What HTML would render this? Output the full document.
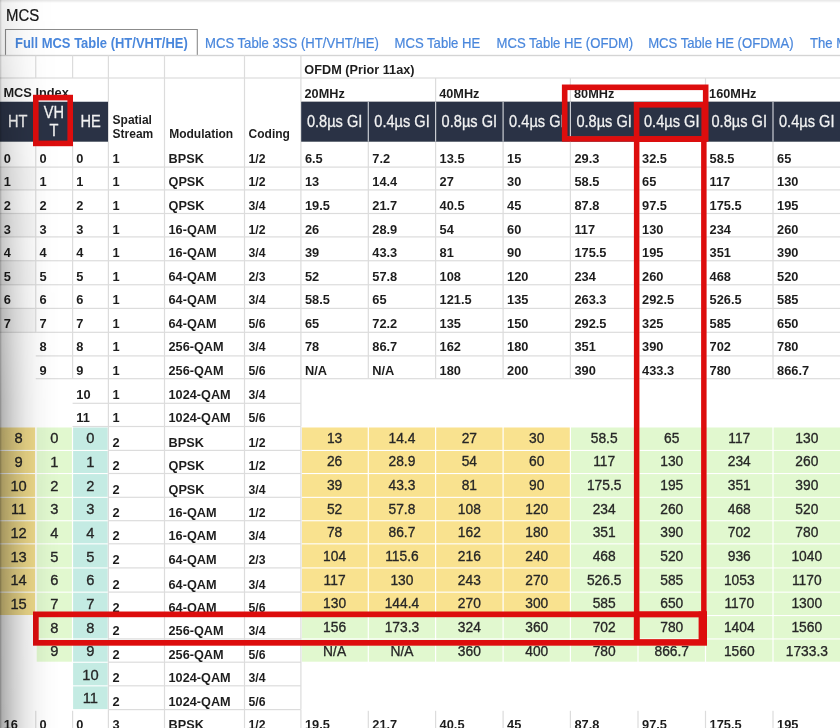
<!DOCTYPE html>
<html lang="en"><head><meta charset="utf-8"><title>MCS</title>
<style>
html,body{margin:0;padding:0;background:#fff;}
body{width:840px;height:728px;overflow:hidden;}
svg{display:block;font-family:"Liberation Sans", Arial, Helvetica, sans-serif;}
</style></head><body>
<svg width="840" height="728" viewBox="0 0 840 728">
<defs>
<linearGradient id="shx" x1="0" y1="0" x2="1" y2="0">
<stop offset="0" stop-color="#000" stop-opacity="0.40"/>
<stop offset="0.017" stop-color="#000" stop-opacity="0.36"/>
<stop offset="0.034" stop-color="#000" stop-opacity="0.32"/>
<stop offset="0.1" stop-color="#000" stop-opacity="0.27"/>
<stop offset="0.25" stop-color="#000" stop-opacity="0.175"/>
<stop offset="0.42" stop-color="#000" stop-opacity="0.095"/>
<stop offset="0.6" stop-color="#000" stop-opacity="0.045"/>
<stop offset="0.8" stop-color="#000" stop-opacity="0.013"/>
<stop offset="1" stop-color="#000" stop-opacity="0"/>
</linearGradient>
<linearGradient id="shy" x1="0" y1="0" x2="0" y2="1">
<stop offset="0" stop-color="#fff" stop-opacity="0.22"/>
<stop offset="0.08" stop-color="#fff" stop-opacity="0.30"/>
<stop offset="0.25" stop-color="#fff" stop-opacity="0.58"/>
<stop offset="0.55" stop-color="#fff" stop-opacity="0.92"/>
<stop offset="1" stop-color="#fff" stop-opacity="1"/>
</linearGradient>
<mask id="shm" maskUnits="userSpaceOnUse" x="0" y="0" width="60" height="728">
<rect x="0" y="0" width="60" height="728" fill="url(#shy)"/>
</mask>
<filter id="soft" filterUnits="userSpaceOnUse" x="-10" y="-10" width="860" height="748"><feGaussianBlur stdDeviation="0.6"/></filter>
<linearGradient id="topg" x1="0" y1="0" x2="0" y2="1">
<stop offset="0" stop-color="#000" stop-opacity="0.10"/>
<stop offset="1" stop-color="#000" stop-opacity="0"/>
</linearGradient>
</defs>
<rect x="0" y="0" width="840" height="728" fill="#fff"/>
<g filter="url(#soft)">

<text transform="translate(5.90 20.70) scale(1 1.1)" font-size="15" font-weight="normal" fill="#151515" text-anchor="start" stroke="#151515" stroke-width="0.2" >MCS</text>
<path d="M5.5 55.3 V29.55 H197.3 V55.3" fill="none" stroke="#8b8b8b" stroke-width="1.1"/>
<text transform="translate(15.00 47.60) scale(1 1.06)" font-size="13" font-weight="bold" fill="#4a87dc" text-anchor="start"  >Full MCS Table (HT/VHT/HE)</text>
<text transform="translate(205.00 47.60) scale(1.01 1.06)" font-size="13" font-weight="normal" fill="#4a87dc" text-anchor="start" stroke="#4a87dc" stroke-width="0.2" >MCS Table 3SS (HT/VHT/HE)</text>
<text transform="translate(394.50 47.60) scale(1.01 1.06)" font-size="13" font-weight="normal" fill="#4a87dc" text-anchor="start" stroke="#4a87dc" stroke-width="0.2" >MCS Table HE</text>
<text transform="translate(496.50 47.60) scale(1.01 1.06)" font-size="13" font-weight="normal" fill="#4a87dc" text-anchor="start" stroke="#4a87dc" stroke-width="0.2" >MCS Table HE (OFDM)</text>
<text transform="translate(648.20 47.60) scale(1.01 1.06)" font-size="13" font-weight="normal" fill="#4a87dc" text-anchor="start" stroke="#4a87dc" stroke-width="0.2" >MCS Table HE (OFDMA)</text>
<text transform="translate(810.00 47.60) scale(1.01 1.06)" font-size="13" font-weight="normal" fill="#4a87dc" text-anchor="start" stroke="#4a87dc" stroke-width="0.2" >The MCS</text>
<rect x="-6.00" y="54.80" width="854.00" height="1.40" fill="#d4d4d4" />
<rect x="-6.00" y="77.40" width="854.00" height="1.20" fill="#dcdcdc" />
<rect x="300.90" y="101.15" width="547.10" height="1.20" fill="#dcdcdc" />
<rect x="-6.00" y="167.10" width="41.75" height="22.80" fill="#f7f7f7" />
<rect x="-6.00" y="213.50" width="41.75" height="23.40" fill="#f7f7f7" />
<rect x="-6.00" y="260.75" width="41.75" height="24.00" fill="#f7f7f7" />
<rect x="-6.00" y="308.40" width="41.75" height="23.90" fill="#f7f7f7" />
<rect x="-6.00" y="166.50" width="854.00" height="1.20" fill="#dcdcdc" />
<rect x="-6.00" y="189.30" width="854.00" height="1.20" fill="#dcdcdc" />
<rect x="-6.00" y="212.90" width="854.00" height="1.20" fill="#dcdcdc" />
<rect x="-6.00" y="236.30" width="854.00" height="1.20" fill="#dcdcdc" />
<rect x="-6.00" y="260.15" width="854.00" height="1.20" fill="#dcdcdc" />
<rect x="-6.00" y="284.15" width="854.00" height="1.20" fill="#dcdcdc" />
<rect x="-6.00" y="307.80" width="854.00" height="1.20" fill="#dcdcdc" />
<rect x="-6.00" y="331.70" width="854.00" height="1.20" fill="#dcdcdc" />
<rect x="35.75" y="355.30" width="812.25" height="1.20" fill="#dcdcdc" />
<rect x="35.75" y="378.10" width="812.25" height="1.20" fill="#dcdcdc" />
<rect x="72.60" y="402.70" width="228.30" height="1.20" fill="#dcdcdc" />
<rect x="72.60" y="425.90" width="228.30" height="1.20" fill="#dcdcdc" />
<rect x="35.15" y="55.50" width="1.20" height="22.50" fill="#dcdcdc" />
<rect x="35.15" y="141.70" width="1.20" height="190.60" fill="#dcdcdc" />
<rect x="72.00" y="55.50" width="1.20" height="22.50" fill="#dcdcdc" />
<rect x="72.00" y="141.70" width="1.20" height="237.00" fill="#dcdcdc" />
<rect x="107.80" y="55.50" width="1.20" height="371.00" fill="#dcdcdc" />
<rect x="163.90" y="55.50" width="1.20" height="371.00" fill="#dcdcdc" />
<rect x="243.90" y="55.50" width="1.20" height="371.00" fill="#dcdcdc" />
<rect x="300.30" y="55.50" width="1.20" height="371.00" fill="#dcdcdc" />
<rect x="367.70" y="101.75" width="1.20" height="276.95" fill="#dcdcdc" />
<rect x="435.00" y="78.00" width="1.20" height="300.70" fill="#dcdcdc" />
<rect x="502.50" y="101.75" width="1.20" height="276.95" fill="#dcdcdc" />
<rect x="569.80" y="78.00" width="1.20" height="300.70" fill="#dcdcdc" />
<rect x="637.40" y="101.75" width="1.20" height="276.95" fill="#dcdcdc" />
<rect x="704.90" y="78.00" width="1.20" height="300.70" fill="#dcdcdc" />
<rect x="772.40" y="101.75" width="1.20" height="276.95" fill="#dcdcdc" />
<text transform="translate(304.30 73.80) scale(1.06 1)" font-size="12" font-weight="bold" fill="#1f1f1f" text-anchor="start"  >OFDM (Prior 11ax)</text>
<text transform="translate(3.40 97.40) scale(1.05 1.05)" font-size="12.2" font-weight="bold" fill="#1f1f1f" text-anchor="start"  >MCS Index</text>
<text transform="translate(304.50 97.70) scale(1.06 1)" font-size="12" font-weight="bold" fill="#1f1f1f" text-anchor="start"  >20MHz</text>
<text transform="translate(439.20 97.70) scale(1.06 1)" font-size="12" font-weight="bold" fill="#1f1f1f" text-anchor="start"  >40MHz</text>
<text transform="translate(574.00 97.70) scale(1.06 1)" font-size="12" font-weight="bold" fill="#1f1f1f" text-anchor="start"  >80MHz</text>
<text transform="translate(709.10 97.70) scale(1.06 1)" font-size="12" font-weight="bold" fill="#1f1f1f" text-anchor="start"  >160MHz</text>
<rect x="-6.00" y="101.75" width="114.00" height="39.95" fill="#293245" />
<rect x="301.20" y="101.75" width="547.10" height="39.95" fill="#293245" />
<rect x="367.70" y="101.75" width="1.20" height="39.95" fill="#c9ccd2" />
<rect x="435.00" y="101.75" width="1.20" height="39.95" fill="#c9ccd2" />
<rect x="502.50" y="101.75" width="1.20" height="39.95" fill="#c9ccd2" />
<rect x="569.80" y="101.75" width="1.20" height="39.95" fill="#c9ccd2" />
<rect x="637.40" y="101.75" width="1.20" height="39.95" fill="#c9ccd2" />
<rect x="704.90" y="101.75" width="1.20" height="39.95" fill="#c9ccd2" />
<rect x="772.40" y="101.75" width="1.20" height="39.95" fill="#c9ccd2" />
<text transform="translate(17.80 127.30) scale(1 1.08)" font-size="14.6" font-weight="normal" fill="#f2f2f2" text-anchor="middle" stroke="#f2f2f2" stroke-width="0.25" >HT</text>
<text transform="translate(53.90 117.90) scale(1 1.08)" font-size="14.6" font-weight="normal" fill="#f2f2f2" text-anchor="middle" stroke="#f2f2f2" stroke-width="0.25" >VH</text>
<text transform="translate(53.90 135.60) scale(1 1.08)" font-size="14.6" font-weight="normal" fill="#f2f2f2" text-anchor="middle" stroke="#f2f2f2" stroke-width="0.25" >T</text>
<text transform="translate(90.60 127.30) scale(1 1.08)" font-size="14.6" font-weight="normal" fill="#f2f2f2" text-anchor="middle" stroke="#f2f2f2" stroke-width="0.25" >HE</text>
<text transform="translate(306.90 127.20) scale(1 1.08)" font-size="14.6" font-weight="normal" fill="#f2f2f2" text-anchor="start" stroke="#f2f2f2" stroke-width="0.25" >0.8µs GI</text>
<text transform="translate(374.30 127.20) scale(1 1.08)" font-size="14.6" font-weight="normal" fill="#f2f2f2" text-anchor="start" stroke="#f2f2f2" stroke-width="0.25" >0.4µs GI</text>
<text transform="translate(441.60 127.20) scale(1 1.08)" font-size="14.6" font-weight="normal" fill="#f2f2f2" text-anchor="start" stroke="#f2f2f2" stroke-width="0.25" >0.8µs GI</text>
<text transform="translate(509.10 127.20) scale(1 1.08)" font-size="14.6" font-weight="normal" fill="#f2f2f2" text-anchor="start" stroke="#f2f2f2" stroke-width="0.25" >0.4µs GI</text>
<text transform="translate(576.40 127.20) scale(1 1.08)" font-size="14.6" font-weight="normal" fill="#f2f2f2" text-anchor="start" stroke="#f2f2f2" stroke-width="0.25" >0.8µs GI</text>
<text transform="translate(644.00 127.20) scale(1 1.08)" font-size="14.6" font-weight="normal" fill="#f2f2f2" text-anchor="start" stroke="#f2f2f2" stroke-width="0.25" >0.4µs GI</text>
<text transform="translate(711.50 127.20) scale(1 1.08)" font-size="14.6" font-weight="normal" fill="#f2f2f2" text-anchor="start" stroke="#f2f2f2" stroke-width="0.25" >0.8µs GI</text>
<text transform="translate(779.00 127.20) scale(1 1.08)" font-size="14.6" font-weight="normal" fill="#f2f2f2" text-anchor="start" stroke="#f2f2f2" stroke-width="0.25" >0.4µs GI</text>
<text x="112.60" y="124.20" font-size="12" font-weight="bold" fill="#1f1f1f" text-anchor="start"  >Spatial</text>
<text x="112.60" y="138.30" font-size="12" font-weight="bold" fill="#1f1f1f" text-anchor="start"  >Stream</text>
<text x="169.20" y="138.30" font-size="12" font-weight="bold" fill="#1f1f1f" text-anchor="start"  >Modulation</text>
<text x="248.60" y="138.30" font-size="12" font-weight="bold" fill="#1f1f1f" text-anchor="start"  >Coding</text>
<text transform="translate(3.70 162.90) scale(1.07 1)" font-size="12" font-weight="bold" fill="#1f1f1f" text-anchor="start"  >0</text>
<text transform="translate(39.45 162.90) scale(1.07 1)" font-size="12" font-weight="bold" fill="#1f1f1f" text-anchor="start"  >0</text>
<text transform="translate(76.30 162.90) scale(1.07 1)" font-size="12" font-weight="bold" fill="#1f1f1f" text-anchor="start"  >0</text>
<text transform="translate(112.40 162.90) scale(1.07 1)" font-size="12" font-weight="bold" fill="#1f1f1f" text-anchor="start"  >1</text>
<text transform="translate(168.50 162.90) scale(1.06 1)" font-size="12" font-weight="bold" fill="#1f1f1f" text-anchor="start"  >BPSK</text>
<text transform="translate(248.50 162.90) scale(1.02 1)" font-size="12" font-weight="bold" fill="#1f1f1f" text-anchor="start"  >1/2</text>
<text transform="translate(304.90 162.90) scale(1.07 1)" font-size="12" font-weight="bold" fill="#1f1f1f" text-anchor="start"  >6.5</text>
<text transform="translate(372.30 162.90) scale(1.07 1)" font-size="12" font-weight="bold" fill="#1f1f1f" text-anchor="start"  >7.2</text>
<text transform="translate(439.60 162.90) scale(1.07 1)" font-size="12" font-weight="bold" fill="#1f1f1f" text-anchor="start"  >13.5</text>
<text transform="translate(507.10 162.90) scale(1.07 1)" font-size="12" font-weight="bold" fill="#1f1f1f" text-anchor="start"  >15</text>
<text transform="translate(574.40 162.90) scale(1.07 1)" font-size="12" font-weight="bold" fill="#1f1f1f" text-anchor="start"  >29.3</text>
<text transform="translate(642.00 162.90) scale(1.07 1)" font-size="12" font-weight="bold" fill="#1f1f1f" text-anchor="start"  >32.5</text>
<text transform="translate(709.50 162.90) scale(1.07 1)" font-size="12" font-weight="bold" fill="#1f1f1f" text-anchor="start"  >58.5</text>
<text transform="translate(777.00 162.90) scale(1.07 1)" font-size="12" font-weight="bold" fill="#1f1f1f" text-anchor="start"  >65</text>
<text transform="translate(3.70 186.47) scale(1.07 1)" font-size="12" font-weight="bold" fill="#1f1f1f" text-anchor="start"  >1</text>
<text transform="translate(39.45 186.47) scale(1.07 1)" font-size="12" font-weight="bold" fill="#1f1f1f" text-anchor="start"  >1</text>
<text transform="translate(76.30 186.47) scale(1.07 1)" font-size="12" font-weight="bold" fill="#1f1f1f" text-anchor="start"  >1</text>
<text transform="translate(112.40 186.47) scale(1.07 1)" font-size="12" font-weight="bold" fill="#1f1f1f" text-anchor="start"  >1</text>
<text transform="translate(168.50 186.47) scale(1.06 1)" font-size="12" font-weight="bold" fill="#1f1f1f" text-anchor="start"  >QPSK</text>
<text transform="translate(248.50 186.47) scale(1.02 1)" font-size="12" font-weight="bold" fill="#1f1f1f" text-anchor="start"  >1/2</text>
<text transform="translate(304.90 186.47) scale(1.07 1)" font-size="12" font-weight="bold" fill="#1f1f1f" text-anchor="start"  >13</text>
<text transform="translate(372.30 186.47) scale(1.07 1)" font-size="12" font-weight="bold" fill="#1f1f1f" text-anchor="start"  >14.4</text>
<text transform="translate(439.60 186.47) scale(1.07 1)" font-size="12" font-weight="bold" fill="#1f1f1f" text-anchor="start"  >27</text>
<text transform="translate(507.10 186.47) scale(1.07 1)" font-size="12" font-weight="bold" fill="#1f1f1f" text-anchor="start"  >30</text>
<text transform="translate(574.40 186.47) scale(1.07 1)" font-size="12" font-weight="bold" fill="#1f1f1f" text-anchor="start"  >58.5</text>
<text transform="translate(642.00 186.47) scale(1.07 1)" font-size="12" font-weight="bold" fill="#1f1f1f" text-anchor="start"  >65</text>
<text transform="translate(709.50 186.47) scale(1.07 1)" font-size="12" font-weight="bold" fill="#1f1f1f" text-anchor="start"  >117</text>
<text transform="translate(777.00 186.47) scale(1.07 1)" font-size="12" font-weight="bold" fill="#1f1f1f" text-anchor="start"  >130</text>
<text transform="translate(3.70 210.04) scale(1.07 1)" font-size="12" font-weight="bold" fill="#1f1f1f" text-anchor="start"  >2</text>
<text transform="translate(39.45 210.04) scale(1.07 1)" font-size="12" font-weight="bold" fill="#1f1f1f" text-anchor="start"  >2</text>
<text transform="translate(76.30 210.04) scale(1.07 1)" font-size="12" font-weight="bold" fill="#1f1f1f" text-anchor="start"  >2</text>
<text transform="translate(112.40 210.04) scale(1.07 1)" font-size="12" font-weight="bold" fill="#1f1f1f" text-anchor="start"  >1</text>
<text transform="translate(168.50 210.04) scale(1.06 1)" font-size="12" font-weight="bold" fill="#1f1f1f" text-anchor="start"  >QPSK</text>
<text transform="translate(248.50 210.04) scale(1.02 1)" font-size="12" font-weight="bold" fill="#1f1f1f" text-anchor="start"  >3/4</text>
<text transform="translate(304.90 210.04) scale(1.07 1)" font-size="12" font-weight="bold" fill="#1f1f1f" text-anchor="start"  >19.5</text>
<text transform="translate(372.30 210.04) scale(1.07 1)" font-size="12" font-weight="bold" fill="#1f1f1f" text-anchor="start"  >21.7</text>
<text transform="translate(439.60 210.04) scale(1.07 1)" font-size="12" font-weight="bold" fill="#1f1f1f" text-anchor="start"  >40.5</text>
<text transform="translate(507.10 210.04) scale(1.07 1)" font-size="12" font-weight="bold" fill="#1f1f1f" text-anchor="start"  >45</text>
<text transform="translate(574.40 210.04) scale(1.07 1)" font-size="12" font-weight="bold" fill="#1f1f1f" text-anchor="start"  >87.8</text>
<text transform="translate(642.00 210.04) scale(1.07 1)" font-size="12" font-weight="bold" fill="#1f1f1f" text-anchor="start"  >97.5</text>
<text transform="translate(709.50 210.04) scale(1.07 1)" font-size="12" font-weight="bold" fill="#1f1f1f" text-anchor="start"  >175.5</text>
<text transform="translate(777.00 210.04) scale(1.07 1)" font-size="12" font-weight="bold" fill="#1f1f1f" text-anchor="start"  >195</text>
<text transform="translate(3.70 233.61) scale(1.07 1)" font-size="12" font-weight="bold" fill="#1f1f1f" text-anchor="start"  >3</text>
<text transform="translate(39.45 233.61) scale(1.07 1)" font-size="12" font-weight="bold" fill="#1f1f1f" text-anchor="start"  >3</text>
<text transform="translate(76.30 233.61) scale(1.07 1)" font-size="12" font-weight="bold" fill="#1f1f1f" text-anchor="start"  >3</text>
<text transform="translate(112.40 233.61) scale(1.07 1)" font-size="12" font-weight="bold" fill="#1f1f1f" text-anchor="start"  >1</text>
<text transform="translate(168.50 233.61) scale(1.06 1)" font-size="12" font-weight="bold" fill="#1f1f1f" text-anchor="start"  >16-QAM</text>
<text transform="translate(248.50 233.61) scale(1.02 1)" font-size="12" font-weight="bold" fill="#1f1f1f" text-anchor="start"  >1/2</text>
<text transform="translate(304.90 233.61) scale(1.07 1)" font-size="12" font-weight="bold" fill="#1f1f1f" text-anchor="start"  >26</text>
<text transform="translate(372.30 233.61) scale(1.07 1)" font-size="12" font-weight="bold" fill="#1f1f1f" text-anchor="start"  >28.9</text>
<text transform="translate(439.60 233.61) scale(1.07 1)" font-size="12" font-weight="bold" fill="#1f1f1f" text-anchor="start"  >54</text>
<text transform="translate(507.10 233.61) scale(1.07 1)" font-size="12" font-weight="bold" fill="#1f1f1f" text-anchor="start"  >60</text>
<text transform="translate(574.40 233.61) scale(1.07 1)" font-size="12" font-weight="bold" fill="#1f1f1f" text-anchor="start"  >117</text>
<text transform="translate(642.00 233.61) scale(1.07 1)" font-size="12" font-weight="bold" fill="#1f1f1f" text-anchor="start"  >130</text>
<text transform="translate(709.50 233.61) scale(1.07 1)" font-size="12" font-weight="bold" fill="#1f1f1f" text-anchor="start"  >234</text>
<text transform="translate(777.00 233.61) scale(1.07 1)" font-size="12" font-weight="bold" fill="#1f1f1f" text-anchor="start"  >260</text>
<text transform="translate(3.70 257.18) scale(1.07 1)" font-size="12" font-weight="bold" fill="#1f1f1f" text-anchor="start"  >4</text>
<text transform="translate(39.45 257.18) scale(1.07 1)" font-size="12" font-weight="bold" fill="#1f1f1f" text-anchor="start"  >4</text>
<text transform="translate(76.30 257.18) scale(1.07 1)" font-size="12" font-weight="bold" fill="#1f1f1f" text-anchor="start"  >4</text>
<text transform="translate(112.40 257.18) scale(1.07 1)" font-size="12" font-weight="bold" fill="#1f1f1f" text-anchor="start"  >1</text>
<text transform="translate(168.50 257.18) scale(1.06 1)" font-size="12" font-weight="bold" fill="#1f1f1f" text-anchor="start"  >16-QAM</text>
<text transform="translate(248.50 257.18) scale(1.02 1)" font-size="12" font-weight="bold" fill="#1f1f1f" text-anchor="start"  >3/4</text>
<text transform="translate(304.90 257.18) scale(1.07 1)" font-size="12" font-weight="bold" fill="#1f1f1f" text-anchor="start"  >39</text>
<text transform="translate(372.30 257.18) scale(1.07 1)" font-size="12" font-weight="bold" fill="#1f1f1f" text-anchor="start"  >43.3</text>
<text transform="translate(439.60 257.18) scale(1.07 1)" font-size="12" font-weight="bold" fill="#1f1f1f" text-anchor="start"  >81</text>
<text transform="translate(507.10 257.18) scale(1.07 1)" font-size="12" font-weight="bold" fill="#1f1f1f" text-anchor="start"  >90</text>
<text transform="translate(574.40 257.18) scale(1.07 1)" font-size="12" font-weight="bold" fill="#1f1f1f" text-anchor="start"  >175.5</text>
<text transform="translate(642.00 257.18) scale(1.07 1)" font-size="12" font-weight="bold" fill="#1f1f1f" text-anchor="start"  >195</text>
<text transform="translate(709.50 257.18) scale(1.07 1)" font-size="12" font-weight="bold" fill="#1f1f1f" text-anchor="start"  >351</text>
<text transform="translate(777.00 257.18) scale(1.07 1)" font-size="12" font-weight="bold" fill="#1f1f1f" text-anchor="start"  >390</text>
<text transform="translate(3.70 280.75) scale(1.07 1)" font-size="12" font-weight="bold" fill="#1f1f1f" text-anchor="start"  >5</text>
<text transform="translate(39.45 280.75) scale(1.07 1)" font-size="12" font-weight="bold" fill="#1f1f1f" text-anchor="start"  >5</text>
<text transform="translate(76.30 280.75) scale(1.07 1)" font-size="12" font-weight="bold" fill="#1f1f1f" text-anchor="start"  >5</text>
<text transform="translate(112.40 280.75) scale(1.07 1)" font-size="12" font-weight="bold" fill="#1f1f1f" text-anchor="start"  >1</text>
<text transform="translate(168.50 280.75) scale(1.06 1)" font-size="12" font-weight="bold" fill="#1f1f1f" text-anchor="start"  >64-QAM</text>
<text transform="translate(248.50 280.75) scale(1.02 1)" font-size="12" font-weight="bold" fill="#1f1f1f" text-anchor="start"  >2/3</text>
<text transform="translate(304.90 280.75) scale(1.07 1)" font-size="12" font-weight="bold" fill="#1f1f1f" text-anchor="start"  >52</text>
<text transform="translate(372.30 280.75) scale(1.07 1)" font-size="12" font-weight="bold" fill="#1f1f1f" text-anchor="start"  >57.8</text>
<text transform="translate(439.60 280.75) scale(1.07 1)" font-size="12" font-weight="bold" fill="#1f1f1f" text-anchor="start"  >108</text>
<text transform="translate(507.10 280.75) scale(1.07 1)" font-size="12" font-weight="bold" fill="#1f1f1f" text-anchor="start"  >120</text>
<text transform="translate(574.40 280.75) scale(1.07 1)" font-size="12" font-weight="bold" fill="#1f1f1f" text-anchor="start"  >234</text>
<text transform="translate(642.00 280.75) scale(1.07 1)" font-size="12" font-weight="bold" fill="#1f1f1f" text-anchor="start"  >260</text>
<text transform="translate(709.50 280.75) scale(1.07 1)" font-size="12" font-weight="bold" fill="#1f1f1f" text-anchor="start"  >468</text>
<text transform="translate(777.00 280.75) scale(1.07 1)" font-size="12" font-weight="bold" fill="#1f1f1f" text-anchor="start"  >520</text>
<text transform="translate(3.70 304.32) scale(1.07 1)" font-size="12" font-weight="bold" fill="#1f1f1f" text-anchor="start"  >6</text>
<text transform="translate(39.45 304.32) scale(1.07 1)" font-size="12" font-weight="bold" fill="#1f1f1f" text-anchor="start"  >6</text>
<text transform="translate(76.30 304.32) scale(1.07 1)" font-size="12" font-weight="bold" fill="#1f1f1f" text-anchor="start"  >6</text>
<text transform="translate(112.40 304.32) scale(1.07 1)" font-size="12" font-weight="bold" fill="#1f1f1f" text-anchor="start"  >1</text>
<text transform="translate(168.50 304.32) scale(1.06 1)" font-size="12" font-weight="bold" fill="#1f1f1f" text-anchor="start"  >64-QAM</text>
<text transform="translate(248.50 304.32) scale(1.02 1)" font-size="12" font-weight="bold" fill="#1f1f1f" text-anchor="start"  >3/4</text>
<text transform="translate(304.90 304.32) scale(1.07 1)" font-size="12" font-weight="bold" fill="#1f1f1f" text-anchor="start"  >58.5</text>
<text transform="translate(372.30 304.32) scale(1.07 1)" font-size="12" font-weight="bold" fill="#1f1f1f" text-anchor="start"  >65</text>
<text transform="translate(439.60 304.32) scale(1.07 1)" font-size="12" font-weight="bold" fill="#1f1f1f" text-anchor="start"  >121.5</text>
<text transform="translate(507.10 304.32) scale(1.07 1)" font-size="12" font-weight="bold" fill="#1f1f1f" text-anchor="start"  >135</text>
<text transform="translate(574.40 304.32) scale(1.07 1)" font-size="12" font-weight="bold" fill="#1f1f1f" text-anchor="start"  >263.3</text>
<text transform="translate(642.00 304.32) scale(1.07 1)" font-size="12" font-weight="bold" fill="#1f1f1f" text-anchor="start"  >292.5</text>
<text transform="translate(709.50 304.32) scale(1.07 1)" font-size="12" font-weight="bold" fill="#1f1f1f" text-anchor="start"  >526.5</text>
<text transform="translate(777.00 304.32) scale(1.07 1)" font-size="12" font-weight="bold" fill="#1f1f1f" text-anchor="start"  >585</text>
<text transform="translate(3.70 327.89) scale(1.07 1)" font-size="12" font-weight="bold" fill="#1f1f1f" text-anchor="start"  >7</text>
<text transform="translate(39.45 327.89) scale(1.07 1)" font-size="12" font-weight="bold" fill="#1f1f1f" text-anchor="start"  >7</text>
<text transform="translate(76.30 327.89) scale(1.07 1)" font-size="12" font-weight="bold" fill="#1f1f1f" text-anchor="start"  >7</text>
<text transform="translate(112.40 327.89) scale(1.07 1)" font-size="12" font-weight="bold" fill="#1f1f1f" text-anchor="start"  >1</text>
<text transform="translate(168.50 327.89) scale(1.06 1)" font-size="12" font-weight="bold" fill="#1f1f1f" text-anchor="start"  >64-QAM</text>
<text transform="translate(248.50 327.89) scale(1.02 1)" font-size="12" font-weight="bold" fill="#1f1f1f" text-anchor="start"  >5/6</text>
<text transform="translate(304.90 327.89) scale(1.07 1)" font-size="12" font-weight="bold" fill="#1f1f1f" text-anchor="start"  >65</text>
<text transform="translate(372.30 327.89) scale(1.07 1)" font-size="12" font-weight="bold" fill="#1f1f1f" text-anchor="start"  >72.2</text>
<text transform="translate(439.60 327.89) scale(1.07 1)" font-size="12" font-weight="bold" fill="#1f1f1f" text-anchor="start"  >135</text>
<text transform="translate(507.10 327.89) scale(1.07 1)" font-size="12" font-weight="bold" fill="#1f1f1f" text-anchor="start"  >150</text>
<text transform="translate(574.40 327.89) scale(1.07 1)" font-size="12" font-weight="bold" fill="#1f1f1f" text-anchor="start"  >292.5</text>
<text transform="translate(642.00 327.89) scale(1.07 1)" font-size="12" font-weight="bold" fill="#1f1f1f" text-anchor="start"  >325</text>
<text transform="translate(709.50 327.89) scale(1.07 1)" font-size="12" font-weight="bold" fill="#1f1f1f" text-anchor="start"  >585</text>
<text transform="translate(777.00 327.89) scale(1.07 1)" font-size="12" font-weight="bold" fill="#1f1f1f" text-anchor="start"  >650</text>
<text transform="translate(39.45 351.46) scale(1.07 1)" font-size="12" font-weight="bold" fill="#1f1f1f" text-anchor="start"  >8</text>
<text transform="translate(76.30 351.46) scale(1.07 1)" font-size="12" font-weight="bold" fill="#1f1f1f" text-anchor="start"  >8</text>
<text transform="translate(112.40 351.46) scale(1.07 1)" font-size="12" font-weight="bold" fill="#1f1f1f" text-anchor="start"  >1</text>
<text transform="translate(168.50 351.46) scale(1.06 1)" font-size="12" font-weight="bold" fill="#1f1f1f" text-anchor="start"  >256-QAM</text>
<text transform="translate(248.50 351.46) scale(1.02 1)" font-size="12" font-weight="bold" fill="#1f1f1f" text-anchor="start"  >3/4</text>
<text transform="translate(304.90 351.46) scale(1.07 1)" font-size="12" font-weight="bold" fill="#1f1f1f" text-anchor="start"  >78</text>
<text transform="translate(372.30 351.46) scale(1.07 1)" font-size="12" font-weight="bold" fill="#1f1f1f" text-anchor="start"  >86.7</text>
<text transform="translate(439.60 351.46) scale(1.07 1)" font-size="12" font-weight="bold" fill="#1f1f1f" text-anchor="start"  >162</text>
<text transform="translate(507.10 351.46) scale(1.07 1)" font-size="12" font-weight="bold" fill="#1f1f1f" text-anchor="start"  >180</text>
<text transform="translate(574.40 351.46) scale(1.07 1)" font-size="12" font-weight="bold" fill="#1f1f1f" text-anchor="start"  >351</text>
<text transform="translate(642.00 351.46) scale(1.07 1)" font-size="12" font-weight="bold" fill="#1f1f1f" text-anchor="start"  >390</text>
<text transform="translate(709.50 351.46) scale(1.07 1)" font-size="12" font-weight="bold" fill="#1f1f1f" text-anchor="start"  >702</text>
<text transform="translate(777.00 351.46) scale(1.07 1)" font-size="12" font-weight="bold" fill="#1f1f1f" text-anchor="start"  >780</text>
<text transform="translate(39.45 375.03) scale(1.07 1)" font-size="12" font-weight="bold" fill="#1f1f1f" text-anchor="start"  >9</text>
<text transform="translate(76.30 375.03) scale(1.07 1)" font-size="12" font-weight="bold" fill="#1f1f1f" text-anchor="start"  >9</text>
<text transform="translate(112.40 375.03) scale(1.07 1)" font-size="12" font-weight="bold" fill="#1f1f1f" text-anchor="start"  >1</text>
<text transform="translate(168.50 375.03) scale(1.06 1)" font-size="12" font-weight="bold" fill="#1f1f1f" text-anchor="start"  >256-QAM</text>
<text transform="translate(248.50 375.03) scale(1.02 1)" font-size="12" font-weight="bold" fill="#1f1f1f" text-anchor="start"  >5/6</text>
<text transform="translate(304.90 375.03) scale(1.07 1)" font-size="12" font-weight="bold" fill="#1f1f1f" text-anchor="start"  >N/A</text>
<text transform="translate(372.30 375.03) scale(1.07 1)" font-size="12" font-weight="bold" fill="#1f1f1f" text-anchor="start"  >N/A</text>
<text transform="translate(439.60 375.03) scale(1.07 1)" font-size="12" font-weight="bold" fill="#1f1f1f" text-anchor="start"  >180</text>
<text transform="translate(507.10 375.03) scale(1.07 1)" font-size="12" font-weight="bold" fill="#1f1f1f" text-anchor="start"  >200</text>
<text transform="translate(574.40 375.03) scale(1.07 1)" font-size="12" font-weight="bold" fill="#1f1f1f" text-anchor="start"  >390</text>
<text transform="translate(642.00 375.03) scale(1.07 1)" font-size="12" font-weight="bold" fill="#1f1f1f" text-anchor="start"  >433.3</text>
<text transform="translate(709.50 375.03) scale(1.07 1)" font-size="12" font-weight="bold" fill="#1f1f1f" text-anchor="start"  >780</text>
<text transform="translate(777.00 375.03) scale(1.07 1)" font-size="12" font-weight="bold" fill="#1f1f1f" text-anchor="start"  >866.7</text>
<text transform="translate(76.30 398.60) scale(1.07 1)" font-size="12" font-weight="bold" fill="#1f1f1f" text-anchor="start"  >10</text>
<text transform="translate(112.40 398.60) scale(1.07 1)" font-size="12" font-weight="bold" fill="#1f1f1f" text-anchor="start"  >1</text>
<text transform="translate(168.50 398.60) scale(1.06 1)" font-size="12" font-weight="bold" fill="#1f1f1f" text-anchor="start"  >1024-QAM</text>
<text transform="translate(248.50 398.60) scale(1.02 1)" font-size="12" font-weight="bold" fill="#1f1f1f" text-anchor="start"  >3/4</text>
<text transform="translate(76.30 422.17) scale(1.07 1)" font-size="12" font-weight="bold" fill="#1f1f1f" text-anchor="start"  >11</text>
<text transform="translate(112.40 422.17) scale(1.07 1)" font-size="12" font-weight="bold" fill="#1f1f1f" text-anchor="start"  >1</text>
<text transform="translate(168.50 422.17) scale(1.06 1)" font-size="12" font-weight="bold" fill="#1f1f1f" text-anchor="start"  >1024-QAM</text>
<text transform="translate(248.50 422.17) scale(1.02 1)" font-size="12" font-weight="bold" fill="#1f1f1f" text-anchor="start"  >5/6</text>
<rect x="-6.00" y="427.50" width="41.10" height="22.40" fill="#f0db8b" />
<rect x="36.70" y="427.50" width="35.20" height="22.40" fill="#e1f8cf" />
<rect x="73.10" y="427.50" width="34.60" height="22.40" fill="#c4ebe3" />
<rect x="301.90" y="427.50" width="65.80" height="22.40" fill="#f9e28f" />
<rect x="368.90" y="427.50" width="66.10" height="22.40" fill="#f9e28f" />
<rect x="436.20" y="427.50" width="66.30" height="22.40" fill="#f9e28f" />
<rect x="503.70" y="427.50" width="66.10" height="22.40" fill="#f9e28f" />
<rect x="571.00" y="427.50" width="66.40" height="22.40" fill="#e1f8cf" />
<rect x="638.60" y="427.50" width="66.30" height="22.40" fill="#e1f8cf" />
<rect x="706.10" y="427.50" width="66.30" height="22.40" fill="#e1f8cf" />
<rect x="773.60" y="427.50" width="66.40" height="22.40" fill="#e1f8cf" />
<rect x="-6.00" y="451.00" width="41.10" height="22.00" fill="#f0db8b" />
<rect x="36.70" y="451.00" width="35.20" height="22.00" fill="#e1f8cf" />
<rect x="73.10" y="451.00" width="34.60" height="22.00" fill="#c4ebe3" />
<rect x="301.90" y="451.00" width="65.80" height="22.00" fill="#f9e28f" />
<rect x="368.90" y="451.00" width="66.10" height="22.00" fill="#f9e28f" />
<rect x="436.20" y="451.00" width="66.30" height="22.00" fill="#f9e28f" />
<rect x="503.70" y="451.00" width="66.10" height="22.00" fill="#f9e28f" />
<rect x="571.00" y="451.00" width="66.40" height="22.00" fill="#e1f8cf" />
<rect x="638.60" y="451.00" width="66.30" height="22.00" fill="#e1f8cf" />
<rect x="706.10" y="451.00" width="66.30" height="22.00" fill="#e1f8cf" />
<rect x="773.60" y="451.00" width="66.40" height="22.00" fill="#e1f8cf" />
<rect x="-6.00" y="474.10" width="41.10" height="22.70" fill="#f0db8b" />
<rect x="36.70" y="474.10" width="35.20" height="22.70" fill="#e1f8cf" />
<rect x="73.10" y="474.10" width="34.60" height="22.70" fill="#c4ebe3" />
<rect x="301.90" y="474.10" width="65.80" height="22.70" fill="#f9e28f" />
<rect x="368.90" y="474.10" width="66.10" height="22.70" fill="#f9e28f" />
<rect x="436.20" y="474.10" width="66.30" height="22.70" fill="#f9e28f" />
<rect x="503.70" y="474.10" width="66.10" height="22.70" fill="#f9e28f" />
<rect x="571.00" y="474.10" width="66.40" height="22.70" fill="#e1f8cf" />
<rect x="638.60" y="474.10" width="66.30" height="22.70" fill="#e1f8cf" />
<rect x="706.10" y="474.10" width="66.30" height="22.70" fill="#e1f8cf" />
<rect x="773.60" y="474.10" width="66.40" height="22.70" fill="#e1f8cf" />
<rect x="-6.00" y="497.90" width="41.10" height="22.30" fill="#f0db8b" />
<rect x="36.70" y="497.90" width="35.20" height="22.30" fill="#e1f8cf" />
<rect x="73.10" y="497.90" width="34.60" height="22.30" fill="#c4ebe3" />
<rect x="301.90" y="497.90" width="65.80" height="22.30" fill="#f9e28f" />
<rect x="368.90" y="497.90" width="66.10" height="22.30" fill="#f9e28f" />
<rect x="436.20" y="497.90" width="66.30" height="22.30" fill="#f9e28f" />
<rect x="503.70" y="497.90" width="66.10" height="22.30" fill="#f9e28f" />
<rect x="571.00" y="497.90" width="66.40" height="22.30" fill="#e1f8cf" />
<rect x="638.60" y="497.90" width="66.30" height="22.30" fill="#e1f8cf" />
<rect x="706.10" y="497.90" width="66.30" height="22.30" fill="#e1f8cf" />
<rect x="773.60" y="497.90" width="66.40" height="22.30" fill="#e1f8cf" />
<rect x="-6.00" y="521.30" width="41.10" height="22.00" fill="#f0db8b" />
<rect x="36.70" y="521.30" width="35.20" height="22.00" fill="#e1f8cf" />
<rect x="73.10" y="521.30" width="34.60" height="22.00" fill="#c4ebe3" />
<rect x="301.90" y="521.30" width="65.80" height="22.00" fill="#f9e28f" />
<rect x="368.90" y="521.30" width="66.10" height="22.00" fill="#f9e28f" />
<rect x="436.20" y="521.30" width="66.30" height="22.00" fill="#f9e28f" />
<rect x="503.70" y="521.30" width="66.10" height="22.00" fill="#f9e28f" />
<rect x="571.00" y="521.30" width="66.40" height="22.00" fill="#e1f8cf" />
<rect x="638.60" y="521.30" width="66.30" height="22.00" fill="#e1f8cf" />
<rect x="706.10" y="521.30" width="66.30" height="22.00" fill="#e1f8cf" />
<rect x="773.60" y="521.30" width="66.40" height="22.00" fill="#e1f8cf" />
<rect x="-6.00" y="544.40" width="41.10" height="23.00" fill="#f0db8b" />
<rect x="36.70" y="544.40" width="35.20" height="23.00" fill="#e1f8cf" />
<rect x="73.10" y="544.40" width="34.60" height="23.00" fill="#c4ebe3" />
<rect x="301.90" y="544.40" width="65.80" height="23.00" fill="#f9e28f" />
<rect x="368.90" y="544.40" width="66.10" height="23.00" fill="#f9e28f" />
<rect x="436.20" y="544.40" width="66.30" height="23.00" fill="#f9e28f" />
<rect x="503.70" y="544.40" width="66.10" height="23.00" fill="#f9e28f" />
<rect x="571.00" y="544.40" width="66.40" height="23.00" fill="#e1f8cf" />
<rect x="638.60" y="544.40" width="66.30" height="23.00" fill="#e1f8cf" />
<rect x="706.10" y="544.40" width="66.30" height="23.00" fill="#e1f8cf" />
<rect x="773.60" y="544.40" width="66.40" height="23.00" fill="#e1f8cf" />
<rect x="-6.00" y="568.50" width="41.10" height="23.10" fill="#f0db8b" />
<rect x="36.70" y="568.50" width="35.20" height="23.10" fill="#e1f8cf" />
<rect x="73.10" y="568.50" width="34.60" height="23.10" fill="#c4ebe3" />
<rect x="301.90" y="568.50" width="65.80" height="23.10" fill="#f9e28f" />
<rect x="368.90" y="568.50" width="66.10" height="23.10" fill="#f9e28f" />
<rect x="436.20" y="568.50" width="66.30" height="23.10" fill="#f9e28f" />
<rect x="503.70" y="568.50" width="66.10" height="23.10" fill="#f9e28f" />
<rect x="571.00" y="568.50" width="66.40" height="23.10" fill="#e1f8cf" />
<rect x="638.60" y="568.50" width="66.30" height="23.10" fill="#e1f8cf" />
<rect x="706.10" y="568.50" width="66.30" height="23.10" fill="#e1f8cf" />
<rect x="773.60" y="568.50" width="66.40" height="23.10" fill="#e1f8cf" />
<rect x="-6.00" y="592.70" width="41.10" height="22.30" fill="#f0db8b" />
<rect x="36.70" y="592.70" width="35.20" height="22.30" fill="#e1f8cf" />
<rect x="73.10" y="592.70" width="34.60" height="22.30" fill="#c4ebe3" />
<rect x="301.90" y="592.70" width="65.80" height="22.30" fill="#f9e28f" />
<rect x="368.90" y="592.70" width="66.10" height="22.30" fill="#f9e28f" />
<rect x="436.20" y="592.70" width="66.30" height="22.30" fill="#f9e28f" />
<rect x="503.70" y="592.70" width="66.10" height="22.30" fill="#f9e28f" />
<rect x="571.00" y="592.70" width="66.40" height="22.30" fill="#e1f8cf" />
<rect x="638.60" y="592.70" width="66.30" height="22.30" fill="#e1f8cf" />
<rect x="706.10" y="592.70" width="66.30" height="22.30" fill="#e1f8cf" />
<rect x="773.60" y="592.70" width="66.40" height="22.30" fill="#e1f8cf" />
<rect x="36.70" y="616.10" width="35.20" height="22.30" fill="#e1f8cf" />
<rect x="73.10" y="616.10" width="34.60" height="22.30" fill="#c4ebe3" />
<rect x="301.90" y="616.10" width="65.80" height="22.30" fill="#e1f8cf" />
<rect x="368.90" y="616.10" width="66.10" height="22.30" fill="#e1f8cf" />
<rect x="436.20" y="616.10" width="66.30" height="22.30" fill="#e1f8cf" />
<rect x="503.70" y="616.10" width="66.10" height="22.30" fill="#e1f8cf" />
<rect x="571.00" y="616.10" width="66.40" height="22.30" fill="#e1f8cf" />
<rect x="638.60" y="616.10" width="66.30" height="22.30" fill="#e1f8cf" />
<rect x="706.10" y="616.10" width="66.30" height="22.30" fill="#e1f8cf" />
<rect x="773.60" y="616.10" width="66.40" height="22.30" fill="#e1f8cf" />
<rect x="36.70" y="639.50" width="35.20" height="22.20" fill="#e1f8cf" />
<rect x="73.10" y="639.50" width="34.60" height="22.20" fill="#c4ebe3" />
<rect x="301.90" y="639.50" width="65.80" height="22.20" fill="#e1f8cf" />
<rect x="368.90" y="639.50" width="66.10" height="22.20" fill="#e1f8cf" />
<rect x="436.20" y="639.50" width="66.30" height="22.20" fill="#e1f8cf" />
<rect x="503.70" y="639.50" width="66.10" height="22.20" fill="#e1f8cf" />
<rect x="571.00" y="639.50" width="66.40" height="22.20" fill="#e1f8cf" />
<rect x="638.60" y="639.50" width="66.30" height="22.20" fill="#e1f8cf" />
<rect x="706.10" y="639.50" width="66.30" height="22.20" fill="#e1f8cf" />
<rect x="773.60" y="639.50" width="66.40" height="22.20" fill="#e1f8cf" />
<rect x="73.10" y="662.80" width="34.60" height="22.50" fill="#c4ebe3" />
<rect x="73.10" y="686.40" width="34.60" height="22.70" fill="#c4ebe3" />
<rect x="108.40" y="449.80" width="192.50" height="1.20" fill="#dcdcdc" />
<rect x="108.40" y="472.90" width="192.50" height="1.20" fill="#dcdcdc" />
<rect x="108.40" y="496.70" width="192.50" height="1.20" fill="#dcdcdc" />
<rect x="108.40" y="520.10" width="192.50" height="1.20" fill="#dcdcdc" />
<rect x="108.40" y="543.20" width="192.50" height="1.20" fill="#dcdcdc" />
<rect x="108.40" y="567.30" width="192.50" height="1.20" fill="#dcdcdc" />
<rect x="108.40" y="591.50" width="192.50" height="1.20" fill="#dcdcdc" />
<rect x="108.40" y="614.90" width="192.50" height="1.20" fill="#dcdcdc" />
<rect x="108.40" y="638.30" width="192.50" height="1.20" fill="#dcdcdc" />
<rect x="108.40" y="661.60" width="192.50" height="1.20" fill="#dcdcdc" />
<rect x="108.40" y="685.20" width="192.50" height="1.20" fill="#dcdcdc" />
<rect x="108.40" y="709.00" width="192.50" height="1.20" fill="#dcdcdc" />
<rect x="107.80" y="426.90" width="1.20" height="282.80" fill="#dcdcdc" />
<rect x="163.90" y="426.90" width="1.20" height="282.80" fill="#dcdcdc" />
<rect x="243.90" y="426.90" width="1.20" height="282.80" fill="#dcdcdc" />
<rect x="300.30" y="426.90" width="1.20" height="282.80" fill="#dcdcdc" />
<clipPath id="c9"><rect x="0" y="645.9" width="840" height="30"/></clipPath>
<text transform="translate(18.60 443.30) scale(1 1.03)" font-size="14.7" font-weight="normal" fill="#262626" text-anchor="middle" stroke="#262626" stroke-width="0.3" >8</text>
<text transform="translate(54.40 443.30) scale(1 1.03)" font-size="14.7" font-weight="normal" fill="#262626" text-anchor="middle" stroke="#262626" stroke-width="0.3" >0</text>
<text transform="translate(90.40 443.30) scale(1 1.03)" font-size="14.7" font-weight="normal" fill="#262626" text-anchor="middle" stroke="#262626" stroke-width="0.3" >0</text>
<text transform="translate(112.40 446.90) scale(1.07 1)" font-size="12" font-weight="bold" fill="#1f1f1f" text-anchor="start"  >2</text>
<text transform="translate(168.50 446.90) scale(1.06 1)" font-size="12" font-weight="bold" fill="#1f1f1f" text-anchor="start"  >BPSK</text>
<text transform="translate(248.50 446.90) scale(1.02 1)" font-size="12" font-weight="bold" fill="#1f1f1f" text-anchor="start"  >1/2</text>
<text transform="translate(334.60 442.70) scale(1 1.03)" font-size="13.8" font-weight="normal" fill="#262626" text-anchor="middle" stroke="#262626" stroke-width="0.3" >13</text>
<text transform="translate(401.95 442.70) scale(1 1.03)" font-size="13.8" font-weight="normal" fill="#262626" text-anchor="middle" stroke="#262626" stroke-width="0.3" >14.4</text>
<text transform="translate(469.35 442.70) scale(1 1.03)" font-size="13.8" font-weight="normal" fill="#262626" text-anchor="middle" stroke="#262626" stroke-width="0.3" >27</text>
<text transform="translate(536.75 442.70) scale(1 1.03)" font-size="13.8" font-weight="normal" fill="#262626" text-anchor="middle" stroke="#262626" stroke-width="0.3" >30</text>
<text transform="translate(604.20 442.70) scale(1 1.03)" font-size="13.8" font-weight="normal" fill="#262626" text-anchor="middle" stroke="#262626" stroke-width="0.3" >58.5</text>
<text transform="translate(671.75 442.70) scale(1 1.03)" font-size="13.8" font-weight="normal" fill="#262626" text-anchor="middle" stroke="#262626" stroke-width="0.3" >65</text>
<text transform="translate(739.25 442.70) scale(1 1.03)" font-size="13.8" font-weight="normal" fill="#262626" text-anchor="middle" stroke="#262626" stroke-width="0.3" >117</text>
<text transform="translate(806.80 442.70) scale(1 1.03)" font-size="13.8" font-weight="normal" fill="#262626" text-anchor="middle" stroke="#262626" stroke-width="0.3" >130</text>
<text transform="translate(18.60 466.95) scale(1 1.03)" font-size="14.7" font-weight="normal" fill="#262626" text-anchor="middle" stroke="#262626" stroke-width="0.3" >9</text>
<text transform="translate(54.40 466.95) scale(1 1.03)" font-size="14.7" font-weight="normal" fill="#262626" text-anchor="middle" stroke="#262626" stroke-width="0.3" >1</text>
<text transform="translate(90.40 466.95) scale(1 1.03)" font-size="14.7" font-weight="normal" fill="#262626" text-anchor="middle" stroke="#262626" stroke-width="0.3" >1</text>
<text transform="translate(112.40 470.00) scale(1.07 1)" font-size="12" font-weight="bold" fill="#1f1f1f" text-anchor="start"  >2</text>
<text transform="translate(168.50 470.00) scale(1.06 1)" font-size="12" font-weight="bold" fill="#1f1f1f" text-anchor="start"  >QPSK</text>
<text transform="translate(248.50 470.00) scale(1.02 1)" font-size="12" font-weight="bold" fill="#1f1f1f" text-anchor="start"  >1/2</text>
<text transform="translate(334.60 466.35) scale(1 1.03)" font-size="13.8" font-weight="normal" fill="#262626" text-anchor="middle" stroke="#262626" stroke-width="0.3" >26</text>
<text transform="translate(401.95 466.35) scale(1 1.03)" font-size="13.8" font-weight="normal" fill="#262626" text-anchor="middle" stroke="#262626" stroke-width="0.3" >28.9</text>
<text transform="translate(469.35 466.35) scale(1 1.03)" font-size="13.8" font-weight="normal" fill="#262626" text-anchor="middle" stroke="#262626" stroke-width="0.3" >54</text>
<text transform="translate(536.75 466.35) scale(1 1.03)" font-size="13.8" font-weight="normal" fill="#262626" text-anchor="middle" stroke="#262626" stroke-width="0.3" >60</text>
<text transform="translate(604.20 466.35) scale(1 1.03)" font-size="13.8" font-weight="normal" fill="#262626" text-anchor="middle" stroke="#262626" stroke-width="0.3" >117</text>
<text transform="translate(671.75 466.35) scale(1 1.03)" font-size="13.8" font-weight="normal" fill="#262626" text-anchor="middle" stroke="#262626" stroke-width="0.3" >130</text>
<text transform="translate(739.25 466.35) scale(1 1.03)" font-size="13.8" font-weight="normal" fill="#262626" text-anchor="middle" stroke="#262626" stroke-width="0.3" >234</text>
<text transform="translate(806.80 466.35) scale(1 1.03)" font-size="13.8" font-weight="normal" fill="#262626" text-anchor="middle" stroke="#262626" stroke-width="0.3" >260</text>
<text transform="translate(18.60 490.60) scale(1 1.03)" font-size="14.7" font-weight="normal" fill="#262626" text-anchor="middle" stroke="#262626" stroke-width="0.3" >10</text>
<text transform="translate(54.40 490.60) scale(1 1.03)" font-size="14.7" font-weight="normal" fill="#262626" text-anchor="middle" stroke="#262626" stroke-width="0.3" >2</text>
<text transform="translate(90.40 490.60) scale(1 1.03)" font-size="14.7" font-weight="normal" fill="#262626" text-anchor="middle" stroke="#262626" stroke-width="0.3" >2</text>
<text transform="translate(112.40 493.80) scale(1.07 1)" font-size="12" font-weight="bold" fill="#1f1f1f" text-anchor="start"  >2</text>
<text transform="translate(168.50 493.80) scale(1.06 1)" font-size="12" font-weight="bold" fill="#1f1f1f" text-anchor="start"  >QPSK</text>
<text transform="translate(248.50 493.80) scale(1.02 1)" font-size="12" font-weight="bold" fill="#1f1f1f" text-anchor="start"  >3/4</text>
<text transform="translate(334.60 490.00) scale(1 1.03)" font-size="13.8" font-weight="normal" fill="#262626" text-anchor="middle" stroke="#262626" stroke-width="0.3" >39</text>
<text transform="translate(401.95 490.00) scale(1 1.03)" font-size="13.8" font-weight="normal" fill="#262626" text-anchor="middle" stroke="#262626" stroke-width="0.3" >43.3</text>
<text transform="translate(469.35 490.00) scale(1 1.03)" font-size="13.8" font-weight="normal" fill="#262626" text-anchor="middle" stroke="#262626" stroke-width="0.3" >81</text>
<text transform="translate(536.75 490.00) scale(1 1.03)" font-size="13.8" font-weight="normal" fill="#262626" text-anchor="middle" stroke="#262626" stroke-width="0.3" >90</text>
<text transform="translate(604.20 490.00) scale(1 1.03)" font-size="13.8" font-weight="normal" fill="#262626" text-anchor="middle" stroke="#262626" stroke-width="0.3" >175.5</text>
<text transform="translate(671.75 490.00) scale(1 1.03)" font-size="13.8" font-weight="normal" fill="#262626" text-anchor="middle" stroke="#262626" stroke-width="0.3" >195</text>
<text transform="translate(739.25 490.00) scale(1 1.03)" font-size="13.8" font-weight="normal" fill="#262626" text-anchor="middle" stroke="#262626" stroke-width="0.3" >351</text>
<text transform="translate(806.80 490.00) scale(1 1.03)" font-size="13.8" font-weight="normal" fill="#262626" text-anchor="middle" stroke="#262626" stroke-width="0.3" >390</text>
<text transform="translate(18.60 514.25) scale(1 1.03)" font-size="14.7" font-weight="normal" fill="#262626" text-anchor="middle" stroke="#262626" stroke-width="0.3" >11</text>
<text transform="translate(54.40 514.25) scale(1 1.03)" font-size="14.7" font-weight="normal" fill="#262626" text-anchor="middle" stroke="#262626" stroke-width="0.3" >3</text>
<text transform="translate(90.40 514.25) scale(1 1.03)" font-size="14.7" font-weight="normal" fill="#262626" text-anchor="middle" stroke="#262626" stroke-width="0.3" >3</text>
<text transform="translate(112.40 517.20) scale(1.07 1)" font-size="12" font-weight="bold" fill="#1f1f1f" text-anchor="start"  >2</text>
<text transform="translate(168.50 517.20) scale(1.06 1)" font-size="12" font-weight="bold" fill="#1f1f1f" text-anchor="start"  >16-QAM</text>
<text transform="translate(248.50 517.20) scale(1.02 1)" font-size="12" font-weight="bold" fill="#1f1f1f" text-anchor="start"  >1/2</text>
<text transform="translate(334.60 513.65) scale(1 1.03)" font-size="13.8" font-weight="normal" fill="#262626" text-anchor="middle" stroke="#262626" stroke-width="0.3" >52</text>
<text transform="translate(401.95 513.65) scale(1 1.03)" font-size="13.8" font-weight="normal" fill="#262626" text-anchor="middle" stroke="#262626" stroke-width="0.3" >57.8</text>
<text transform="translate(469.35 513.65) scale(1 1.03)" font-size="13.8" font-weight="normal" fill="#262626" text-anchor="middle" stroke="#262626" stroke-width="0.3" >108</text>
<text transform="translate(536.75 513.65) scale(1 1.03)" font-size="13.8" font-weight="normal" fill="#262626" text-anchor="middle" stroke="#262626" stroke-width="0.3" >120</text>
<text transform="translate(604.20 513.65) scale(1 1.03)" font-size="13.8" font-weight="normal" fill="#262626" text-anchor="middle" stroke="#262626" stroke-width="0.3" >234</text>
<text transform="translate(671.75 513.65) scale(1 1.03)" font-size="13.8" font-weight="normal" fill="#262626" text-anchor="middle" stroke="#262626" stroke-width="0.3" >260</text>
<text transform="translate(739.25 513.65) scale(1 1.03)" font-size="13.8" font-weight="normal" fill="#262626" text-anchor="middle" stroke="#262626" stroke-width="0.3" >468</text>
<text transform="translate(806.80 513.65) scale(1 1.03)" font-size="13.8" font-weight="normal" fill="#262626" text-anchor="middle" stroke="#262626" stroke-width="0.3" >520</text>
<text transform="translate(18.60 537.90) scale(1 1.03)" font-size="14.7" font-weight="normal" fill="#262626" text-anchor="middle" stroke="#262626" stroke-width="0.3" >12</text>
<text transform="translate(54.40 537.90) scale(1 1.03)" font-size="14.7" font-weight="normal" fill="#262626" text-anchor="middle" stroke="#262626" stroke-width="0.3" >4</text>
<text transform="translate(90.40 537.90) scale(1 1.03)" font-size="14.7" font-weight="normal" fill="#262626" text-anchor="middle" stroke="#262626" stroke-width="0.3" >4</text>
<text transform="translate(112.40 540.30) scale(1.07 1)" font-size="12" font-weight="bold" fill="#1f1f1f" text-anchor="start"  >2</text>
<text transform="translate(168.50 540.30) scale(1.06 1)" font-size="12" font-weight="bold" fill="#1f1f1f" text-anchor="start"  >16-QAM</text>
<text transform="translate(248.50 540.30) scale(1.02 1)" font-size="12" font-weight="bold" fill="#1f1f1f" text-anchor="start"  >3/4</text>
<text transform="translate(334.60 537.30) scale(1 1.03)" font-size="13.8" font-weight="normal" fill="#262626" text-anchor="middle" stroke="#262626" stroke-width="0.3" >78</text>
<text transform="translate(401.95 537.30) scale(1 1.03)" font-size="13.8" font-weight="normal" fill="#262626" text-anchor="middle" stroke="#262626" stroke-width="0.3" >86.7</text>
<text transform="translate(469.35 537.30) scale(1 1.03)" font-size="13.8" font-weight="normal" fill="#262626" text-anchor="middle" stroke="#262626" stroke-width="0.3" >162</text>
<text transform="translate(536.75 537.30) scale(1 1.03)" font-size="13.8" font-weight="normal" fill="#262626" text-anchor="middle" stroke="#262626" stroke-width="0.3" >180</text>
<text transform="translate(604.20 537.30) scale(1 1.03)" font-size="13.8" font-weight="normal" fill="#262626" text-anchor="middle" stroke="#262626" stroke-width="0.3" >351</text>
<text transform="translate(671.75 537.30) scale(1 1.03)" font-size="13.8" font-weight="normal" fill="#262626" text-anchor="middle" stroke="#262626" stroke-width="0.3" >390</text>
<text transform="translate(739.25 537.30) scale(1 1.03)" font-size="13.8" font-weight="normal" fill="#262626" text-anchor="middle" stroke="#262626" stroke-width="0.3" >702</text>
<text transform="translate(806.80 537.30) scale(1 1.03)" font-size="13.8" font-weight="normal" fill="#262626" text-anchor="middle" stroke="#262626" stroke-width="0.3" >780</text>
<text transform="translate(18.60 561.55) scale(1 1.03)" font-size="14.7" font-weight="normal" fill="#262626" text-anchor="middle" stroke="#262626" stroke-width="0.3" >13</text>
<text transform="translate(54.40 561.55) scale(1 1.03)" font-size="14.7" font-weight="normal" fill="#262626" text-anchor="middle" stroke="#262626" stroke-width="0.3" >5</text>
<text transform="translate(90.40 561.55) scale(1 1.03)" font-size="14.7" font-weight="normal" fill="#262626" text-anchor="middle" stroke="#262626" stroke-width="0.3" >5</text>
<text transform="translate(112.40 564.40) scale(1.07 1)" font-size="12" font-weight="bold" fill="#1f1f1f" text-anchor="start"  >2</text>
<text transform="translate(168.50 564.40) scale(1.06 1)" font-size="12" font-weight="bold" fill="#1f1f1f" text-anchor="start"  >64-QAM</text>
<text transform="translate(248.50 564.40) scale(1.02 1)" font-size="12" font-weight="bold" fill="#1f1f1f" text-anchor="start"  >2/3</text>
<text transform="translate(334.60 560.95) scale(1 1.03)" font-size="13.8" font-weight="normal" fill="#262626" text-anchor="middle" stroke="#262626" stroke-width="0.3" >104</text>
<text transform="translate(401.95 560.95) scale(1 1.03)" font-size="13.8" font-weight="normal" fill="#262626" text-anchor="middle" stroke="#262626" stroke-width="0.3" >115.6</text>
<text transform="translate(469.35 560.95) scale(1 1.03)" font-size="13.8" font-weight="normal" fill="#262626" text-anchor="middle" stroke="#262626" stroke-width="0.3" >216</text>
<text transform="translate(536.75 560.95) scale(1 1.03)" font-size="13.8" font-weight="normal" fill="#262626" text-anchor="middle" stroke="#262626" stroke-width="0.3" >240</text>
<text transform="translate(604.20 560.95) scale(1 1.03)" font-size="13.8" font-weight="normal" fill="#262626" text-anchor="middle" stroke="#262626" stroke-width="0.3" >468</text>
<text transform="translate(671.75 560.95) scale(1 1.03)" font-size="13.8" font-weight="normal" fill="#262626" text-anchor="middle" stroke="#262626" stroke-width="0.3" >520</text>
<text transform="translate(739.25 560.95) scale(1 1.03)" font-size="13.8" font-weight="normal" fill="#262626" text-anchor="middle" stroke="#262626" stroke-width="0.3" >936</text>
<text transform="translate(806.80 560.95) scale(1 1.03)" font-size="13.8" font-weight="normal" fill="#262626" text-anchor="middle" stroke="#262626" stroke-width="0.3" >1040</text>
<text transform="translate(18.60 585.20) scale(1 1.03)" font-size="14.7" font-weight="normal" fill="#262626" text-anchor="middle" stroke="#262626" stroke-width="0.3" >14</text>
<text transform="translate(54.40 585.20) scale(1 1.03)" font-size="14.7" font-weight="normal" fill="#262626" text-anchor="middle" stroke="#262626" stroke-width="0.3" >6</text>
<text transform="translate(90.40 585.20) scale(1 1.03)" font-size="14.7" font-weight="normal" fill="#262626" text-anchor="middle" stroke="#262626" stroke-width="0.3" >6</text>
<text transform="translate(112.40 588.60) scale(1.07 1)" font-size="12" font-weight="bold" fill="#1f1f1f" text-anchor="start"  >2</text>
<text transform="translate(168.50 588.60) scale(1.06 1)" font-size="12" font-weight="bold" fill="#1f1f1f" text-anchor="start"  >64-QAM</text>
<text transform="translate(248.50 588.60) scale(1.02 1)" font-size="12" font-weight="bold" fill="#1f1f1f" text-anchor="start"  >3/4</text>
<text transform="translate(334.60 584.60) scale(1 1.03)" font-size="13.8" font-weight="normal" fill="#262626" text-anchor="middle" stroke="#262626" stroke-width="0.3" >117</text>
<text transform="translate(401.95 584.60) scale(1 1.03)" font-size="13.8" font-weight="normal" fill="#262626" text-anchor="middle" stroke="#262626" stroke-width="0.3" >130</text>
<text transform="translate(469.35 584.60) scale(1 1.03)" font-size="13.8" font-weight="normal" fill="#262626" text-anchor="middle" stroke="#262626" stroke-width="0.3" >243</text>
<text transform="translate(536.75 584.60) scale(1 1.03)" font-size="13.8" font-weight="normal" fill="#262626" text-anchor="middle" stroke="#262626" stroke-width="0.3" >270</text>
<text transform="translate(604.20 584.60) scale(1 1.03)" font-size="13.8" font-weight="normal" fill="#262626" text-anchor="middle" stroke="#262626" stroke-width="0.3" >526.5</text>
<text transform="translate(671.75 584.60) scale(1 1.03)" font-size="13.8" font-weight="normal" fill="#262626" text-anchor="middle" stroke="#262626" stroke-width="0.3" >585</text>
<text transform="translate(739.25 584.60) scale(1 1.03)" font-size="13.8" font-weight="normal" fill="#262626" text-anchor="middle" stroke="#262626" stroke-width="0.3" >1053</text>
<text transform="translate(806.80 584.60) scale(1 1.03)" font-size="13.8" font-weight="normal" fill="#262626" text-anchor="middle" stroke="#262626" stroke-width="0.3" >1170</text>
<text transform="translate(18.60 608.85) scale(1 1.03)" font-size="14.7" font-weight="normal" fill="#262626" text-anchor="middle" stroke="#262626" stroke-width="0.3" >15</text>
<text transform="translate(54.40 608.85) scale(1 1.03)" font-size="14.7" font-weight="normal" fill="#262626" text-anchor="middle" stroke="#262626" stroke-width="0.3" >7</text>
<text transform="translate(90.40 608.85) scale(1 1.03)" font-size="14.7" font-weight="normal" fill="#262626" text-anchor="middle" stroke="#262626" stroke-width="0.3" >7</text>
<text transform="translate(112.40 612.00) scale(1.07 1)" font-size="12" font-weight="bold" fill="#1f1f1f" text-anchor="start"  >2</text>
<text transform="translate(168.50 612.00) scale(1.06 1)" font-size="12" font-weight="bold" fill="#1f1f1f" text-anchor="start"  >64-QAM</text>
<text transform="translate(248.50 612.00) scale(1.02 1)" font-size="12" font-weight="bold" fill="#1f1f1f" text-anchor="start"  >5/6</text>
<text transform="translate(334.60 608.25) scale(1 1.03)" font-size="13.8" font-weight="normal" fill="#262626" text-anchor="middle" stroke="#262626" stroke-width="0.3" >130</text>
<text transform="translate(401.95 608.25) scale(1 1.03)" font-size="13.8" font-weight="normal" fill="#262626" text-anchor="middle" stroke="#262626" stroke-width="0.3" >144.4</text>
<text transform="translate(469.35 608.25) scale(1 1.03)" font-size="13.8" font-weight="normal" fill="#262626" text-anchor="middle" stroke="#262626" stroke-width="0.3" >270</text>
<text transform="translate(536.75 608.25) scale(1 1.03)" font-size="13.8" font-weight="normal" fill="#262626" text-anchor="middle" stroke="#262626" stroke-width="0.3" >300</text>
<text transform="translate(604.20 608.25) scale(1 1.03)" font-size="13.8" font-weight="normal" fill="#262626" text-anchor="middle" stroke="#262626" stroke-width="0.3" >585</text>
<text transform="translate(671.75 608.25) scale(1 1.03)" font-size="13.8" font-weight="normal" fill="#262626" text-anchor="middle" stroke="#262626" stroke-width="0.3" >650</text>
<text transform="translate(739.25 608.25) scale(1 1.03)" font-size="13.8" font-weight="normal" fill="#262626" text-anchor="middle" stroke="#262626" stroke-width="0.3" >1170</text>
<text transform="translate(806.80 608.25) scale(1 1.03)" font-size="13.8" font-weight="normal" fill="#262626" text-anchor="middle" stroke="#262626" stroke-width="0.3" >1300</text>
<text transform="translate(54.40 632.50) scale(1 1.03)" font-size="14.7" font-weight="normal" fill="#262626" text-anchor="middle" stroke="#262626" stroke-width="0.3" >8</text>
<text transform="translate(90.40 632.50) scale(1 1.03)" font-size="14.7" font-weight="normal" fill="#262626" text-anchor="middle" stroke="#262626" stroke-width="0.3" >8</text>
<text transform="translate(112.40 635.40) scale(1.07 1)" font-size="12" font-weight="bold" fill="#1f1f1f" text-anchor="start"  >2</text>
<text transform="translate(168.50 635.40) scale(1.06 1)" font-size="12" font-weight="bold" fill="#1f1f1f" text-anchor="start"  >256-QAM</text>
<text transform="translate(248.50 635.40) scale(1.02 1)" font-size="12" font-weight="bold" fill="#1f1f1f" text-anchor="start"  >3/4</text>
<text transform="translate(334.60 631.90) scale(1 1.03)" font-size="13.8" font-weight="normal" fill="#262626" text-anchor="middle" stroke="#262626" stroke-width="0.3" >156</text>
<text transform="translate(401.95 631.90) scale(1 1.03)" font-size="13.8" font-weight="normal" fill="#262626" text-anchor="middle" stroke="#262626" stroke-width="0.3" >173.3</text>
<text transform="translate(469.35 631.90) scale(1 1.03)" font-size="13.8" font-weight="normal" fill="#262626" text-anchor="middle" stroke="#262626" stroke-width="0.3" >324</text>
<text transform="translate(536.75 631.90) scale(1 1.03)" font-size="13.8" font-weight="normal" fill="#262626" text-anchor="middle" stroke="#262626" stroke-width="0.3" >360</text>
<text transform="translate(604.20 631.90) scale(1 1.03)" font-size="13.8" font-weight="normal" fill="#262626" text-anchor="middle" stroke="#262626" stroke-width="0.3" >702</text>
<text transform="translate(671.75 631.90) scale(1 1.03)" font-size="13.8" font-weight="normal" fill="#262626" text-anchor="middle" stroke="#262626" stroke-width="0.3" >780</text>
<text transform="translate(739.25 631.90) scale(1 1.03)" font-size="13.8" font-weight="normal" fill="#262626" text-anchor="middle" stroke="#262626" stroke-width="0.3" >1404</text>
<text transform="translate(806.80 631.90) scale(1 1.03)" font-size="13.8" font-weight="normal" fill="#262626" text-anchor="middle" stroke="#262626" stroke-width="0.3" >1560</text>
<g clip-path="url(#c9)">
<text transform="translate(54.40 656.15) scale(1 1.03)" font-size="14.7" font-weight="normal" fill="#262626" text-anchor="middle" stroke="#262626" stroke-width="0.3" >9</text>
</g>
<g clip-path="url(#c9)">
<text transform="translate(90.40 656.15) scale(1 1.03)" font-size="14.7" font-weight="normal" fill="#262626" text-anchor="middle" stroke="#262626" stroke-width="0.3" >9</text>
</g>
<text transform="translate(112.40 658.70) scale(1.07 1)" font-size="12" font-weight="bold" fill="#1f1f1f" text-anchor="start"  >2</text>
<text transform="translate(168.50 658.70) scale(1.06 1)" font-size="12" font-weight="bold" fill="#1f1f1f" text-anchor="start"  >256-QAM</text>
<text transform="translate(248.50 658.70) scale(1.02 1)" font-size="12" font-weight="bold" fill="#1f1f1f" text-anchor="start"  >5/6</text>
<g clip-path="url(#c9)">
<text transform="translate(334.60 655.55) scale(1 1.03)" font-size="13.8" font-weight="normal" fill="#262626" text-anchor="middle" stroke="#262626" stroke-width="0.3" >N/A</text>
</g>
<g clip-path="url(#c9)">
<text transform="translate(401.95 655.55) scale(1 1.03)" font-size="13.8" font-weight="normal" fill="#262626" text-anchor="middle" stroke="#262626" stroke-width="0.3" >N/A</text>
</g>
<g clip-path="url(#c9)">
<text transform="translate(469.35 655.55) scale(1 1.03)" font-size="13.8" font-weight="normal" fill="#262626" text-anchor="middle" stroke="#262626" stroke-width="0.3" >360</text>
</g>
<g clip-path="url(#c9)">
<text transform="translate(536.75 655.55) scale(1 1.03)" font-size="13.8" font-weight="normal" fill="#262626" text-anchor="middle" stroke="#262626" stroke-width="0.3" >400</text>
</g>
<g clip-path="url(#c9)">
<text transform="translate(604.20 655.55) scale(1 1.03)" font-size="13.8" font-weight="normal" fill="#262626" text-anchor="middle" stroke="#262626" stroke-width="0.3" >780</text>
</g>
<g clip-path="url(#c9)">
<text transform="translate(671.75 655.55) scale(1 1.03)" font-size="13.8" font-weight="normal" fill="#262626" text-anchor="middle" stroke="#262626" stroke-width="0.3" >866.7</text>
</g>
<g clip-path="url(#c9)">
<text transform="translate(739.25 655.55) scale(1 1.03)" font-size="13.8" font-weight="normal" fill="#262626" text-anchor="middle" stroke="#262626" stroke-width="0.3" >1560</text>
</g>
<g clip-path="url(#c9)">
<text transform="translate(806.80 655.55) scale(1 1.03)" font-size="13.8" font-weight="normal" fill="#262626" text-anchor="middle" stroke="#262626" stroke-width="0.3" >1733.3</text>
</g>
<text transform="translate(90.40 679.80) scale(1 1.03)" font-size="14.7" font-weight="normal" fill="#262626" text-anchor="middle" stroke="#262626" stroke-width="0.3" >10</text>
<text transform="translate(112.40 682.30) scale(1.07 1)" font-size="12" font-weight="bold" fill="#1f1f1f" text-anchor="start"  >2</text>
<text transform="translate(168.50 682.30) scale(1.06 1)" font-size="12" font-weight="bold" fill="#1f1f1f" text-anchor="start"  >1024-QAM</text>
<text transform="translate(248.50 682.30) scale(1.02 1)" font-size="12" font-weight="bold" fill="#1f1f1f" text-anchor="start"  >3/4</text>
<text transform="translate(90.40 703.45) scale(1 1.03)" font-size="14.7" font-weight="normal" fill="#262626" text-anchor="middle" stroke="#262626" stroke-width="0.3" >11</text>
<text transform="translate(112.40 706.10) scale(1.07 1)" font-size="12" font-weight="bold" fill="#1f1f1f" text-anchor="start"  >2</text>
<text transform="translate(168.50 706.10) scale(1.06 1)" font-size="12" font-weight="bold" fill="#1f1f1f" text-anchor="start"  >1024-QAM</text>
<text transform="translate(248.50 706.10) scale(1.02 1)" font-size="12" font-weight="bold" fill="#1f1f1f" text-anchor="start"  >5/6</text>
<rect x="35.15" y="710.80" width="1.20" height="25.20" fill="#dcdcdc" />
<rect x="72.00" y="710.80" width="1.20" height="25.20" fill="#dcdcdc" />
<rect x="107.80" y="710.00" width="1.20" height="26.00" fill="#dcdcdc" />
<rect x="163.90" y="710.00" width="1.20" height="26.00" fill="#dcdcdc" />
<rect x="243.90" y="710.00" width="1.20" height="26.00" fill="#dcdcdc" />
<rect x="300.30" y="710.00" width="1.20" height="26.00" fill="#dcdcdc" />
<rect x="367.70" y="710.80" width="1.20" height="25.20" fill="#dcdcdc" />
<rect x="435.00" y="710.80" width="1.20" height="25.20" fill="#dcdcdc" />
<rect x="502.50" y="710.80" width="1.20" height="25.20" fill="#dcdcdc" />
<rect x="569.80" y="710.80" width="1.20" height="25.20" fill="#dcdcdc" />
<rect x="637.40" y="710.80" width="1.20" height="25.20" fill="#dcdcdc" />
<rect x="704.90" y="710.80" width="1.20" height="25.20" fill="#dcdcdc" />
<rect x="772.40" y="710.80" width="1.20" height="25.20" fill="#dcdcdc" />
<text transform="translate(3.70 728.60) scale(1.07 1)" font-size="12" font-weight="bold" fill="#1f1f1f" text-anchor="start"  >16</text>
<text transform="translate(39.45 728.60) scale(1.07 1)" font-size="12" font-weight="bold" fill="#1f1f1f" text-anchor="start"  >0</text>
<text transform="translate(76.30 728.60) scale(1.07 1)" font-size="12" font-weight="bold" fill="#1f1f1f" text-anchor="start"  >0</text>
<text transform="translate(112.40 728.60) scale(1.07 1)" font-size="12" font-weight="bold" fill="#1f1f1f" text-anchor="start"  >3</text>
<text transform="translate(168.50 728.60) scale(1.06 1)" font-size="12" font-weight="bold" fill="#1f1f1f" text-anchor="start"  >BPSK</text>
<text transform="translate(248.50 728.60) scale(1.02 1)" font-size="12" font-weight="bold" fill="#1f1f1f" text-anchor="start"  >1/2</text>
<text transform="translate(304.90 728.60) scale(1.07 1)" font-size="12" font-weight="bold" fill="#1f1f1f" text-anchor="start"  >19.5</text>
<text transform="translate(372.30 728.60) scale(1.07 1)" font-size="12" font-weight="bold" fill="#1f1f1f" text-anchor="start"  >21.7</text>
<text transform="translate(439.60 728.60) scale(1.07 1)" font-size="12" font-weight="bold" fill="#1f1f1f" text-anchor="start"  >40.5</text>
<text transform="translate(507.10 728.60) scale(1.07 1)" font-size="12" font-weight="bold" fill="#1f1f1f" text-anchor="start"  >45</text>
<text transform="translate(574.40 728.60) scale(1.07 1)" font-size="12" font-weight="bold" fill="#1f1f1f" text-anchor="start"  >87.8</text>
<text transform="translate(642.00 728.60) scale(1.07 1)" font-size="12" font-weight="bold" fill="#1f1f1f" text-anchor="start"  >97.5</text>
<text transform="translate(709.50 728.60) scale(1.07 1)" font-size="12" font-weight="bold" fill="#1f1f1f" text-anchor="start"  >175.5</text>
<text transform="translate(777.00 728.60) scale(1.07 1)" font-size="12" font-weight="bold" fill="#1f1f1f" text-anchor="start"  >195</text>
<rect x="35.80" y="97.60" width="34.40" height="45.80" fill="none" stroke="#dd1111" stroke-width="5.6"/>
<rect x="564.70" y="87.30" width="141.00" height="51.60" fill="none" stroke="#dd1111" stroke-width="5.6"/>
<rect x="636.60" y="104.80" width="67.60" height="34.10" fill="none" stroke="#dd1111" stroke-width="5.6"/>
<rect x="636.65" y="138.95" width="67.20" height="503.30" fill="none" stroke="#dd1111" stroke-width="5.5"/>
<rect x="35.85" y="614.35" width="668.30" height="28.50" fill="none" stroke="#dd1111" stroke-width="5.7"/>
<rect x="636.75" y="614.35" width="67.20" height="27.80" fill="none" stroke="#dd1111" stroke-width="5.7"/>
<rect x="698.60" y="611.50" width="8.20" height="33.50" fill="#dd1111" />
</g>
<rect x="0" y="0" width="60" height="728" fill="url(#shx)" mask="url(#shm)"/>
<rect x="0" y="0" width="1.3" height="728" fill="#000" fill-opacity="0.11"/>
<rect x="0" y="0" width="840" height="3" fill="url(#topg)"/>
</svg></body></html>
